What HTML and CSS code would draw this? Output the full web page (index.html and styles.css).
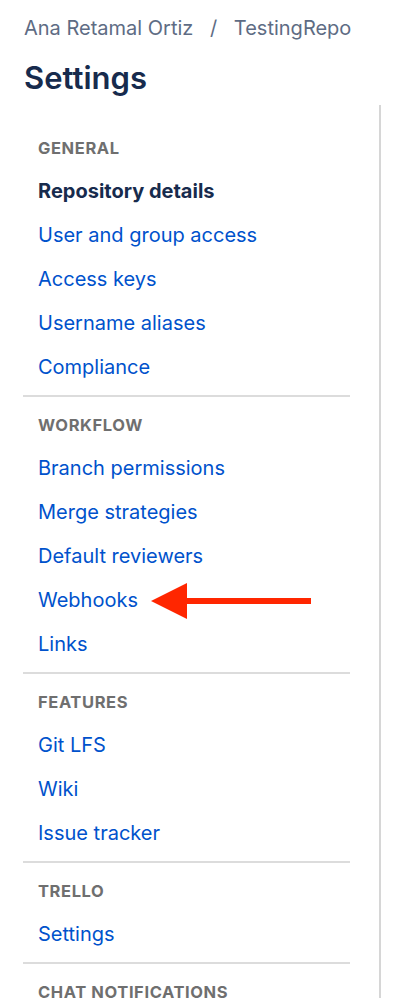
FILE: index.html
```html
<!DOCTYPE html>
<html lang="en">
<head>
    <meta charset="UTF-8">
    <meta name="viewport" content="width=device-width, initial-scale=1.0">
    <title>Settings - TestingRepo</title>
    <link rel="stylesheet" href="styles.css">
</head>
<body>
    <div class="page">
        <div class="breadcrumb">
            <a href="#">Ana Retamal Ortiz</a>
            <span class="sep">/</span>
            <a href="#">TestingRepo</a>
        </div>
        <h1>Settings</h1>

        <div class="layout">
            <nav class="settings-nav">
                <div class="nav-section">
                    <h2>General</h2>
                    <ul>
                        <li class="active">Repository details</li>
                        <li><a href="#">User and group access</a></li>
                        <li><a href="#">Access keys</a></li>
                        <li><a href="#">Username aliases</a></li>
                        <li><a href="#">Compliance</a></li>
                    </ul>
                </div>

                <div class="nav-section">
                    <h2>Workflow</h2>
                    <ul>
                        <li><a href="#">Branch permissions</a></li>
                        <li><a href="#">Merge strategies</a></li>
                        <li><a href="#">Default reviewers</a></li>
                        <li class="pointed">
                            <a href="#">Webhooks</a>
                            <!-- red annotation arrow -->
                            <svg class="arrow" width="160" height="36" viewBox="0 0 160 36">
                                <polygon points="0,18 36,0 36,15 160,15 160,21 36,21 36,36" fill="#ff2600"/>
                            </svg>
                        </li>
                        <li><a href="#">Links</a></li>
                    </ul>
                </div>

                <div class="nav-section">
                    <h2>Features</h2>
                    <ul>
                        <li><a href="#">Git LFS</a></li>
                        <li><a href="#">Wiki</a></li>
                        <li><a href="#">Issue tracker</a></li>
                    </ul>
                </div>

                <div class="nav-section">
                    <h2>Trello</h2>
                    <ul>
                        <li><a href="#">Settings</a></li>
                    </ul>
                </div>

                <div class="nav-section">
                    <h2>Chat notifications</h2>
                    <ul>
                        <li><a href="#">Chat notifications</a></li>
                    </ul>
                </div>
            </nav>
        </div>
    </div>
</body>
</html>
```

FILE: styles.css
```css
body {
    font-family: Inter, "Noto Sans", sans-serif;
    background-color: #fff;
    margin: 0;
    overflow: hidden;
}

a {
    text-decoration: none;
}

.page {
    padding: 16px 0 0 24px;
}

.breadcrumb {
    font-size: 20px;
    line-height: 24px;
    color: #5e6c84;
}

.breadcrumb a {
    color: #5e6c84;
}

.breadcrumb .sep {
    margin: 0 11px;
}

h1 {
    margin: 18px 0 0;
    font-size: 31px;
    line-height: 40px;
    font-weight: 600;
    color: #172b4d;
}

.layout {
    margin-top: 7px;
}

.settings-nav {
    width: 327px;
    margin-left: -1px;
    padding: 14px 29px 0 0;
    border-right: 2px solid #d6d6d6;
}

.nav-section {
    padding: 17px 0 6px;
    border-bottom: 2px solid #dcdcdc;
}

.nav-section:first-child {
    padding-top: 18px;
}

h2 {
    margin: 0 0 10px 15px;
    font-size: 16.5px;
    line-height: 22px;
    font-weight: 700;
    letter-spacing: 0.6px;
    text-transform: uppercase;
    color: #6f6f6f;
}

ul {
    list-style: none;
    margin: 0;
    padding: 0 0 0 15px;
}

li {
    font-size: 20px;
    line-height: 44px;
    height: 44px;
}

li a {
    color: #0052cc;
}

li.active {
    font-weight: 700;
    color: #172b4d;
}

li.pointed {
    position: relative;
}

.arrow {
    position: absolute;
    left: 113px;
    top: 5px;
}
```
